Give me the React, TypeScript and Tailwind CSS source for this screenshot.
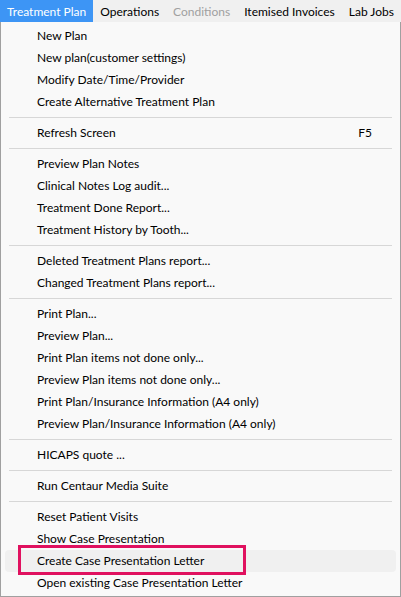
const groups: { label: string; shortcut?: string; active?: boolean }[][] = [
  [
    { label: 'New Plan' },
    { label: 'New plan(customer settings)' },
    { label: 'Modify Date/Time/Provider' },
    { label: 'Create Alternative Treatment Plan' },
  ],
  [{ label: 'Refresh Screen', shortcut: 'F5' }],
  [
    { label: 'Preview Plan Notes' },
    { label: 'Clinical Notes Log audit...' },
    { label: 'Treatment Done Report...' },
    { label: 'Treatment History by Tooth...' },
  ],
  [
    { label: 'Deleted Treatment Plans report...' },
    { label: 'Changed Treatment Plans report...' },
  ],
  [
    { label: 'Print Plan...' },
    { label: 'Preview Plan...' },
    { label: 'Print Plan items not done only...' },
    { label: 'Preview Plan items not done only...' },
    { label: 'Print Plan/Insurance Information (A4 only)' },
    { label: 'Preview Plan/Insurance Information (A4 only)' },
  ],
  [{ label: 'HICAPS quote ...' }],
  [{ label: 'Run Centaur Media Suite' }],
  [
    { label: 'Reset Patient Visits' },
    { label: 'Show Case Presentation' },
    { label: 'Create Case Presentation Letter', active: true },
    { label: 'Open existing Case Presentation Letter' },
  ],
]

const menus = [
  { label: 'Treatment Plan', open: true },
  { label: 'Operations' },
  { label: 'Conditions', disabled: true },
  { label: 'Itemised Invoices' },
  { label: 'Lab Jobs' },
]

export default function App() {
  return (
    <div
      className="w-[401px] h-[597px] overflow-hidden bg-white text-[12px] text-black"
      style={{ fontFamily: '"Segoe UI", Lato, "Noto Sans", sans-serif' }}
    >
      {/* menu bar */}
      <div className="flex h-[22px] items-stretch whitespace-nowrap bg-[#f0f0f0]">
        {menus.map((m) => (
          <div
            key={m.label}
            className={
              m.open
                ? 'flex items-center bg-[#3d95f5] px-[7px] pt-px text-white'
                : m.disabled
                  ? 'flex items-center px-[7px] pt-px text-[#a0a0a0]'
                  : 'flex items-center px-[7px] pt-px'
            }
          >
            {m.label}
          </div>
        ))}
      </div>

      {/* dropdown */}
      <div className="h-[575px] whitespace-nowrap border border-t-0 border-[#a0a0a0] bg-[#f9f9f9] px-[4px] pt-[3px] pb-[1px]">
        {groups.map((g, gi) => (
          <div key={gi}>
            {gi > 0 && (
              <div className="flex h-[9px] items-center px-[4px]">
                <div className="h-px w-full bg-[#d7d7d7]" />
              </div>
            )}
            {g.map((item) => (
              <div
                key={item.label}
                className={
                  item.active
                    ? 'relative flex h-[22px] items-center rounded-[4px] bg-[#f0f0f0] pl-[32px] pr-[24px]'
                    : 'relative flex h-[22px] items-center pl-[32px] pr-[24px]'
                }
              >
                <span className="flex-1">{item.label}</span>
                {item.shortcut && <span>{item.shortcut}</span>}
                {item.active && (
                  <div className="absolute left-[13px] top-[-5px] h-[30px] w-[228px] border-[3px] border-[#e0115f]" />
                )}
              </div>
            ))}
          </div>
        ))}
      </div>
    </div>
  )
}
